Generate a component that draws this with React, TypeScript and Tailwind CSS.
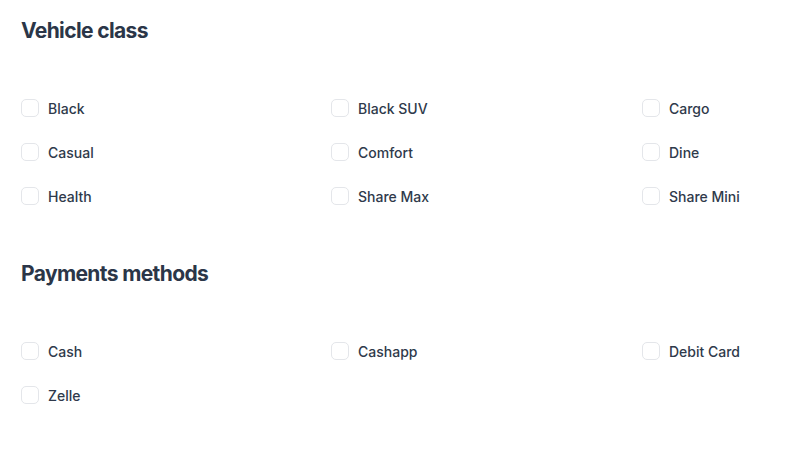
import React from "react";

const vehicleClasses = [
  "Black",
  "Black SUV",
  "Cargo",
  "Casual",
  "Comfort",
  "Dine",
  "Health",
  "Share Max",
  "Share Mini",
];

const paymentMethods = ["Cash", "Cashapp", "Debit Card", "Zelle"];

function CheckItem({ label }: { label: string }) {
  return (
    <label className="flex h-[44px] items-center gap-[9px] cursor-pointer">
      <input type="checkbox" className="peer sr-only" />
      <span className="block h-[18px] w-[18px] shrink-0 rounded-[5px] border border-[#e4e6ea] bg-white" />
      <span className="text-[14px] font-medium text-[#2f3a4b]">{label}</span>
    </label>
  );
}

function Section({ title, items }: { title: string; items: string[] }) {
  return (
    <section>
      <h2 className="h-[20px] text-[21px] font-bold leading-[20px] tracking-[-0.03em] text-[#2b3648]">
        {title}
      </h2>
      <div className="mt-[45px] grid grid-cols-[310px_311px_auto]">
        {items.map((item) => (
          <CheckItem key={item} label={item} />
        ))}
      </div>
    </section>
  );
}

export default function App() {
  return (
    <div
      className="min-h-screen bg-white pl-[21px] pt-[21px]"
      style={{ fontFamily: "Inter, 'Noto Sans', sans-serif" }}
    >
      <div className="flex flex-col gap-[46px]">
        <Section title="Vehicle class" items={vehicleClasses} />
        <Section title="Payments methods" items={paymentMethods} />
      </div>
    </div>
  );
}
